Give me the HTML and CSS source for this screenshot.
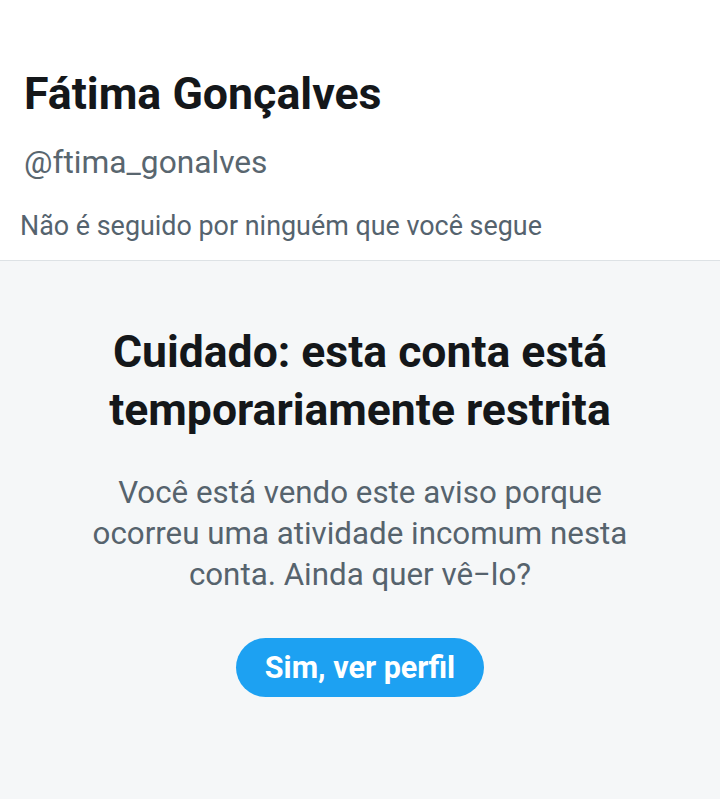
FILE: index.html
```html
<!DOCTYPE html>
<html lang="pt">
  <head>
    <meta charset="UTF-8" />
    <meta name="viewport" content="width=device-width, initial-scale=1.0" />
    <title>Fátima Gonçalves</title>
    <link rel="stylesheet" href="styles.css">
  </head>
  <body>
    <main>
      <header class="profile">
        <h1 class="name">Fátima Gonçalves</h1>
        <p class="handle">@ftima_gonalves</p>
        <p class="followers">Não é seguido por ninguém que você segue</p>
      </header>
      <section class="warning">
        <h2>Cuidado: esta conta está temporariamente restrita</h2>
        <p>Você está vendo este aviso porque ocorreu uma atividade incomum nesta conta. Ainda quer vê−lo?</p>
        <button class="view-btn">Sim, ver perfil</button>
      </section>
    </main>
  </body>
</html>
```

FILE: styles.css
```css
body {
  font-family: Roboto, "Noto Sans", sans-serif;
  margin: 0;
  padding: 0;
  background: #f5f7f8;
  color: #14171a;
}
.profile {
  background: #fff;
  padding: 68px 24px 18px 24px;
  border-bottom: 1px solid #dde2e5;
}
.name {
  margin: 0;
  font-size: 44.7px;
  font-weight: 700;
  line-height: 52px;
}
.handle {
  margin: 25px 0 0 0;
  font-size: 31.7px;
  line-height: 36px;
  color: #59666f;
}
.followers {
  margin: 29px 0 0 -4px;
  font-size: 26.9px;
  line-height: 32px;
  color: #55636e;
}
.warning {
  display: flex;
  flex-direction: column;
  align-items: center;
  text-align: center;
  padding: 62px 80px 0 80px;
}
.warning h2 {
  margin: 0;
  font-size: 44.5px;
  font-weight: 700;
  line-height: 58px;
}
.warning p {
  margin: 33px 0 0 0;
  font-size: 31.3px;
  line-height: 41px;
  color: #56636d;
}
.view-btn {
  margin-top: 43px;
  height: 59px;
  padding: 0 29px;
  border: none;
  border-radius: 30px;
  background-color: #1da1f2;
  color: #fff;
  font-family: inherit;
  font-size: 30.5px;
  font-weight: 700;
}
```
